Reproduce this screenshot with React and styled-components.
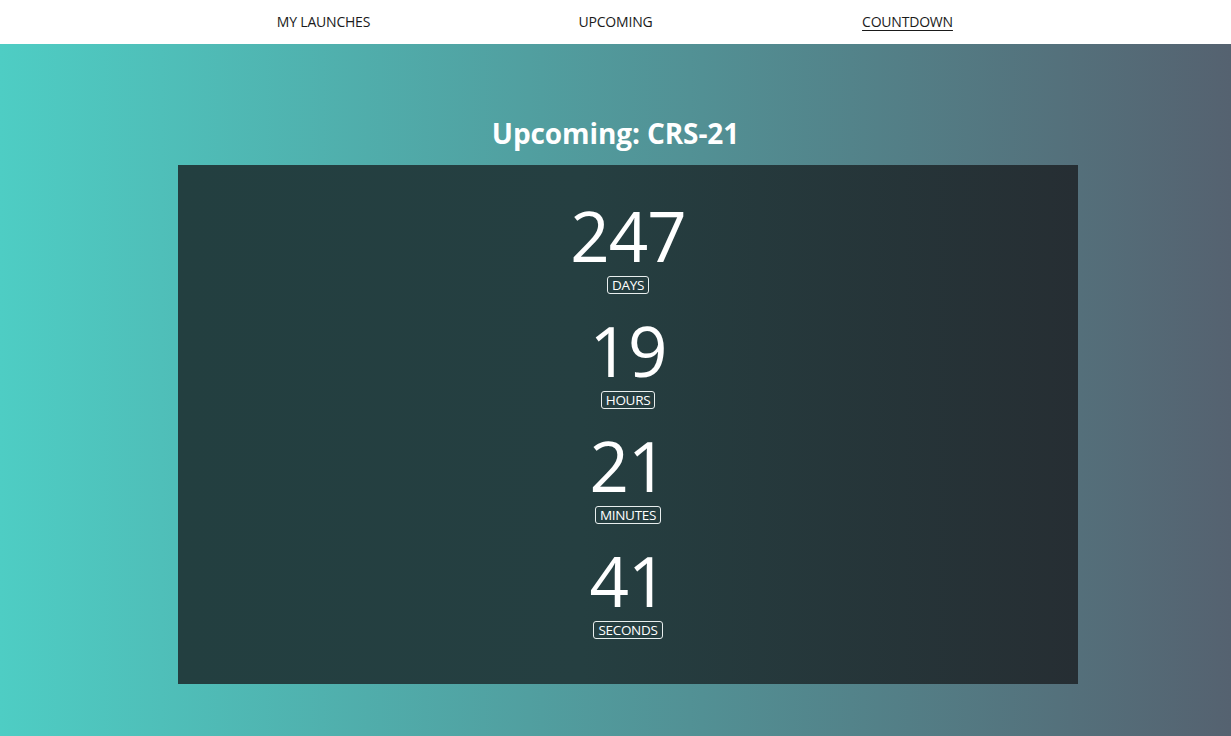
import React from "react";
import styled, { createGlobalStyle } from "styled-components";

const Global = createGlobalStyle`
  html, body { margin: 0; padding: 0; }
  body { font-family: "Open Sans", "Noto Sans", sans-serif; background: #fff; }
`;

const Nav = styled.nav`
  height: 44px;
  box-sizing: border-box;
  padding-bottom: 2px;
  background: #ffffff;
  display: grid;
  grid-template-columns: repeat(3, 292px);
  justify-content: center;
  align-items: center;
`;

const NavItem = styled.a`
  justify-self: center;
  font-size: 14px;
  color: #1a1a1a;
  text-decoration: ${(p) => (p.$active ? "underline" : "none")};
  text-underline-offset: 3px;
  letter-spacing: -0.2px;
  cursor: pointer;
`;

const Main = styled.main`
  min-height: 692px;
  box-sizing: border-box;
  background: linear-gradient(to right, #4ecdc4, #556270);
  padding-top: 72px;
  display: flex;
  flex-direction: column;
  align-items: center;
`;

const Title = styled.h1`
  margin: 0;
  font-size: 28px;
  line-height: 34px;
  font-weight: 700;
  color: #ffffff;
  letter-spacing: -0.1px;
`;

const Board = styled.section`
  margin: 15px 0 0 25px;
  width: 900px;
  box-sizing: border-box;
  padding: 34px 0 45px;
  background: linear-gradient(to right, #233f40, #253f41 45%, #262e33);
  display: flex;
  flex-direction: column;
  align-items: center;
  gap: 20px;
`;

const Unit = styled.div`
  display: flex;
  flex-direction: column;
  align-items: center;
`;

const Value = styled.div`
  font-size: 69px;
  line-height: 72px;
  height: 72px;
  color: #ffffff;
  font-weight: 400;
  letter-spacing: -1px;
`;

const Label = styled.span`
  margin-top: 5px;
  font-size: 13.5px;
  line-height: 16px;
  color: #ffffff;
  border: 1px solid #e8eeee;
  border-radius: 3px;
  padding: 0 4px;
  letter-spacing: -0.3px;
`;

const units = [
  { value: "247", label: "DAYS" },
  { value: "19", label: "HOURS" },
  { value: "21", label: "MINUTES" },
  { value: "41", label: "SECONDS" },
];

export default function App() {
  return (
    <>
      <Global />
      <Nav>
        <NavItem>MY LAUNCHES</NavItem>
        <NavItem>UPCOMING</NavItem>
        <NavItem $active>COUNTDOWN</NavItem>
      </Nav>
      <Main>
        <Title>Upcoming: CRS-21</Title>
        <Board>
          {units.map((u) => (
            <Unit key={u.label}>
              <Value>{u.value}</Value>
              <Label>{u.label}</Label>
            </Unit>
          ))}
        </Board>
      </Main>
    </>
  );
}
